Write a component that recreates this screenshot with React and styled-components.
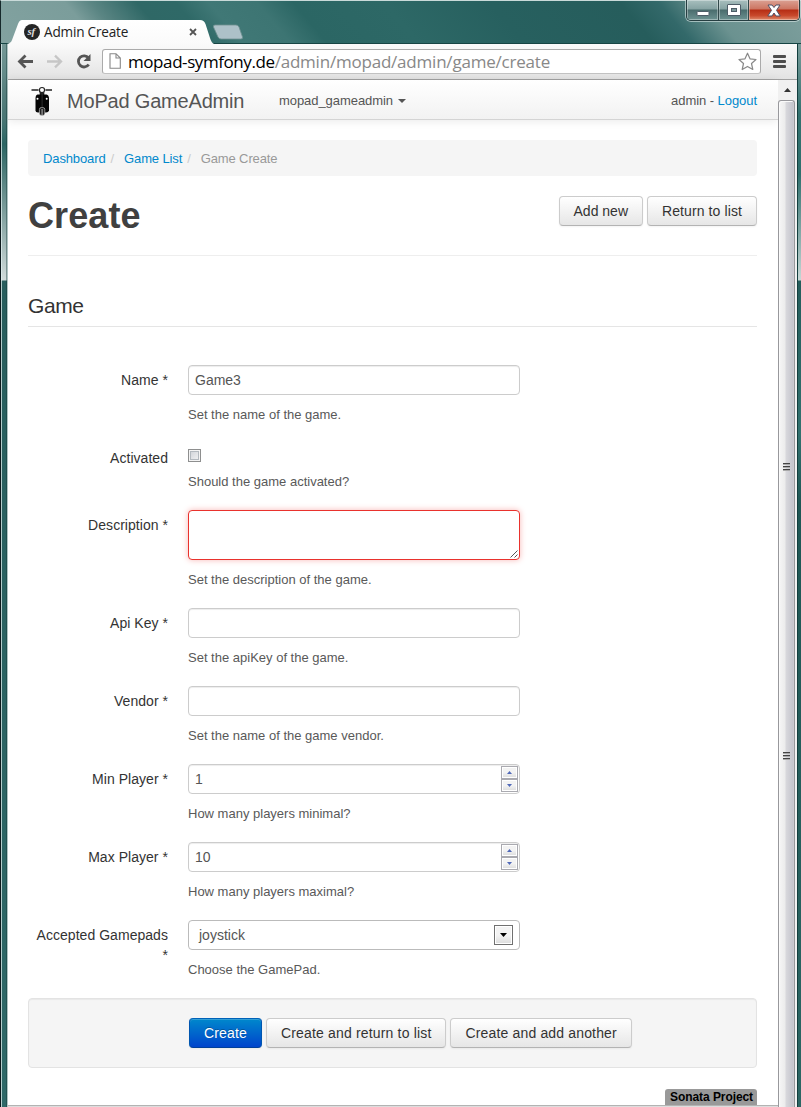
import React from 'react';
import styled, { createGlobalStyle, css } from 'styled-components';

const GlobalStyle = createGlobalStyle`
  *, *::before, *::after { box-sizing: border-box; }
  html, body { margin: 0; padding: 0; overflow: hidden; }
  body {
    font: 14px/20px "Liberation Sans", Arial, sans-serif;
    color: #333;
    background: #285e5d;
  }
`;

const BrowserWindow = styled.div`
  width: 801px;
  height: 1107px;
  display: flex;
  flex-direction: column;
  overflow: hidden;
`;

const TitleBar = styled.header`
  height: 44px;
  flex: none;
  display: flex;
  align-items: flex-end;
  position: relative;
  padding-left: 7px;
  border-top: 1px solid #c9dad9;
  border-bottom: 1px solid #174544;
  border-left: 1px solid #16292b;
  background: linear-gradient(50deg, #82a2a0 0, #7b9d9b 75px, #5a8583 95px, #2f6866 130px, #2f6967 160px, #407876 185px, #3d7573 222px, #2b6664 250px, #2d6866 320px, #27605f 400px, #265d5c 500px, #33696a 530px, #6b9290 565px, #7c9e9c 630px);
`;

const TabShape = styled.div`
  position: relative;
  width: 207px;
  height: 24px;
  display: flex;
  align-items: center;
  margin-bottom: -1px;
  margin-left: -1px;
  padding: 0 17px 0 17px;
  font: 13.6px/20px "Open Sans", "Noto Sans", sans-serif;
  letter-spacing: -0.2px;
  color: #222;

  > svg.shape { position: absolute; left: 0; top: 0; }
  > *:not(.shape) { position: relative; }
`;

const TabTitle = styled.span`
  flex: 1;
  margin-left: 4px;
  white-space: nowrap;
`;

const NewTab = styled.svg`
  margin: 0 0 3px -2px;
`;

const WindowControls = styled.div`
  position: absolute;
  right: 1px;
  top: -1px;
  height: 21px;
  display: flex;
  border: 1px solid #263e41;
  border-top: 0;
  border-radius: 0 0 5px 5px;
  box-shadow: 0 0 0 1px rgba(210, 226, 225, 0.65);
  overflow: hidden;
`;

const ControlButton = styled.div`
  width: ${(p) => p.$w}px;
  display: flex;
  align-items: center;
  justify-content: center;
  border-left: 1px solid #32494b;
  box-shadow: inset 0 0 0 1px rgba(255, 255, 255, 0.35);
  background: linear-gradient(#a8bfbe 0, #86a3a3 45%, #4a6c6d 50%, #6d9291 100%);
  &:first-child { border-left: 0; }
  ${(p) => p.$close && css`
    background: linear-gradient(#dba193 0, #cc7562 45%, #b62d14 50%, #c8492c 78%, #df8b6c 100%);
  `}
`;

const Frame = styled.div`
  flex: 1;
  min-height: 0;
  display: flex;
`;

const Edge = styled.div`
  flex: none;
  width: ${(p) => (p.$left ? 8 : 4)}px;
  ${(p) => p.$left ? css`
    border-left: 1px solid #0c191b;
    border-right: 1px solid #afc4c3;
    background:
      linear-gradient(90deg, rgba(225,240,240,.75) 0 1px, transparent 1px 5px, rgba(15,50,50,.4) 5px 6px),
      linear-gradient(#759896 0, #4a7775 75px, #2b6563 100px, #698f8d 150px, #d0dbda 236px, #285e5d 237px, #2f6968 100%);
  ` : css`
    border-left: 1px solid #123e3e;
    background: linear-gradient(#789c9a 0, #33716f 70px, #2e6f6d 130px, #c6d7d5 236px, #245d5c 237px, #32716f 390px, #1f5755 460px, #2c6664 100%);
  `}
`;

const Shell = styled.div`
  flex: 1;
  min-width: 0;
  display: flex;
  flex-direction: column;
  background: #fff;
`;

const Toolbar = styled.div`
  flex: none;
  height: 36px;
  display: flex;
  align-items: center;
  padding: 0 11px 1px 9px;
  border-bottom: 1px solid #a2a2a2;
  border-radius: 0 3px 0 0;
  background: linear-gradient(#fafafa, #e3e3e3);
`;

const NavIcons = styled.svg`
  flex: none;
`;

const AddressBar = styled.div`
  flex: 1;
  height: 25px;
  display: flex;
  align-items: center;
  margin-left: 5px;
  padding: 0 3px 0 6px;
  border: 1px solid #aaa;
  border-bottom-color: #c3c3c3;
  border-radius: 3px;
  background: #fff;
  font: 17px/23px "Open Sans", "Noto Sans", sans-serif;
`;

const Url = styled.span`
  flex: 1;
  margin-left: 7px;
  white-space: nowrap;
  letter-spacing: -0.21px;
  color: #888;
  b { font-weight: 400; color: #000; letter-spacing: -0.42px; }
`;

const MenuIcon = styled.div`
  width: 13px;
  margin-left: 12px;
  display: grid;
  gap: 2px;
  i { height: 3px; border-radius: 1px; background: #4d4d4d; }
`;

const Viewport = styled.div`
  flex: 1;
  min-height: 0;
  display: flex;
`;

const Page = styled.main`
  flex: 1;
  min-width: 0;
  display: flex;
  flex-direction: column;
  border-bottom: 1px solid #ddd;
  padding-bottom: 1px;
  box-shadow: inset 0 -1px #b3b3b3;
`;

const Navbar = styled.nav`
  flex: none;
  height: 40px;
  display: flex;
  align-items: center;
  padding: 2px 21px 0 23px;
  border-bottom: 1px solid #d4d4d4;
  box-shadow: 0 1px 9px rgba(0, 0, 0, 0.09);
  background: linear-gradient(#fff, #f2f2f2);
  font-size: 13px;
  line-height: 20px;
  letter-spacing: -0.06px;
  color: #555;
`;

const Brand = styled.span`
  width: 177px;
  margin-left: 15px;
  font-size: 20px;
  letter-spacing: -0.19px;
  white-space: nowrap;
`;

const SiteMenu = styled.span`
  flex: 1;
  margin-left: 35px;
  display: flex;
  align-items: center;
  &::after {
    content: '';
    margin-left: 5px;
    border: 4px solid transparent;
    border-top-color: #555;
    border-bottom: 0;
  }
`;

const Link = styled.a`
  color: #08c;
  text-decoration: none;
`;

const Content = styled.div`
  flex: 1;
  min-height: 0;
  display: flex;
  flex-direction: column;
  padding: 20px 21px 0 20px;
`;

const Breadcrumb = styled.ul`
  flex: none;
  height: 36px;
  display: flex;
  align-items: center;
  margin: 0;
  padding: 1px 15px 0;
  list-style: none;
  border-radius: 4px;
  background: #f5f5f5;
  font-size: 13px;
  letter-spacing: -0.12px;
  color: #999;
  li + li::before { content: '/'; padding: 0 10px 0 5px; color: #ccc; }
`;

const PageHeader = styled.div`
  flex: none;
  height: 80px;
  display: flex;
  justify-content: space-between;
  align-items: flex-start;
  padding-top: 20px;
  border-bottom: 1px solid #eee;
  h1 { margin: 0; font-size: 36px; line-height: 39px; letter-spacing: 0.1px; color: #404040; }
`;

const ButtonGroup = styled.div`
  display: flex;
  gap: 4px;
`;

const Button = styled.button`
  height: 30px;
  padding: 0 14px;
  border: 1px solid #ccc;
  border-bottom-color: #b3b3b3;
  border-radius: 4px;
  background: linear-gradient(#fff, #e6e6e6);
  box-shadow: inset 0 1px 0 rgba(255, 255, 255, 0.2), 0 1px 2px rgba(0, 0, 0, 0.05);
  font: 14px/20px "Liberation Sans", Arial, sans-serif;
  letter-spacing: ${(p) => p.$spacing || 0}px;
  color: #333;
  white-space: nowrap;
  ${(p) => p.$primary && css`
    border-color: #0062b8 #0056b0 #003f9b;
    background: linear-gradient(#08c, #04c);
    color: #fff;
    text-shadow: 0 -1px 0 rgba(0, 0, 0, 0.25);
  `}
`;

const Legend = styled.h2`
  flex: none;
  height: 41px;
  margin: 30px 0 38px;
  border-bottom: 1px solid #e5e5e5;
  font-size: 21px;
  line-height: 40px;
  letter-spacing: -0.4px;
  font-weight: 400;
`;

const FieldRow = styled.div`
  flex: none;
  display: flex;
  margin-bottom: 18px;
`;

const Label = styled.label`
  width: 140px;
  margin-right: 20px;
  padding-top: 5px;
  text-align: right;
  letter-spacing: 0.04px;
`;

const Control = styled.div`
  width: 332px;
`;

const boxStyle = css`
  display: flex;
  width: 332px;
  height: 30px;
  border: 1px solid #ccc;
  border-radius: 4px;
  background: #fff;
  color: #555;
  box-shadow: inset 0 1px 1px rgba(0, 0, 0, 0.075);
`;

const TextBox = styled.div`
  ${boxStyle}
  align-items: center;
  justify-content: space-between;
  padding-left: 6px;
`;

const SelectBox = styled.div`
  ${boxStyle}
  align-items: center;
  justify-content: space-between;
  border-color: #bbb;
  box-shadow: none;
  padding: 0 6px 0 10px;
`;

const Area = styled.div`
  ${boxStyle}
  height: 50px;
  align-items: flex-end;
  justify-content: flex-end;
  padding: 1px;
  border-color: #e9322d;
  box-shadow: 0 0 6px #f8b9b7;
`;

const CheckBox = styled.div`
  width: 13px;
  height: 13px;
  margin: 6px 0 10px;
  border: 1px solid #8e8f8f;
  box-shadow: inset 0 0 0 1px #f4f4f4, inset 0 0 0 2px #b3b9bf;
  background: linear-gradient(135deg, #cbcfd5, #f6f6f6);
`;

const Help = styled.p`
  margin: 10px 0 0;
  font-size: 13px;
  line-height: 20px;
  color: #595959;
  white-space: nowrap;
`;

const Spinner = styled.div`
  width: 18px;
  height: 26px;
  display: grid;
  grid-template-rows: 13px 13px;
`;

const ArrowButton = styled.div`
  display: flex;
  align-items: center;
  justify-content: center;
  border: 1px solid ${(p) => (p.$dark ? '#707070' : '#aaaab0')};
  box-shadow: inset 0 0 0 1px #fff;
  background: linear-gradient(#f3f3f3 50%, #dcdcdc);
  ${(p) => p.$dark && css`
    width: 19px;
    height: 20px;
  `}
  ${(p) => !p.$dark && css`
    width: 17px;
  `}
`;

const FormActions = styled.div`
  flex: none;
  height: 70px;
  display: flex;
  align-items: center;
  padding-left: 160px;
  gap: 4px;
  border: 1px solid #e3e3e3;
  border-radius: 4px;
  background: #f5f5f5;
  box-shadow: inset 0 1px 1px rgba(0, 0, 0, 0.05);
`;

const FooterLabel = styled.span`
  align-self: flex-end;
  height: 16px;
  margin-top: 21px;
  padding: 0 4px 0 5px;
  border-radius: 3px 3px 0 0;
  background: #999;
  color: #000;
  font-size: 12px;
  line-height: 17px;
  font-weight: 700;
  letter-spacing: -0.08px;
  white-space: nowrap;
`;

const Scrollbar = styled.div`
  width: 19px;
  flex: none;
  display: flex;
  flex-direction: column;
  align-items: stretch;
  background: #f0f0f0;
`;

const ScrollUp = styled.div`
  height: 20px;
  display: flex;
  align-items: center;
  justify-content: center;
  padding-right: 1px;
`;

const Thumb = styled.div`
  flex: 1;
  position: relative;
  border: 1px solid #98989c;
  border-bottom: 0;
  border-radius: 3px 3px 0 0;
  box-shadow: inset 1px 1px #fafafa;
  margin-right: 2px;
  background: linear-gradient(90deg, #f6f6f6 0, #ececec 6px, #d8d8dc 7px, #c5c5cd 14px, #ddd 16px);
`;

const Grip = styled.div`
  position: absolute;
  left: 4px;
  top: ${(p) => p.$top}px;
  width: 7px;
  display: grid;
  gap: 1px;
  i { height: 2px; border-top: 1px solid #444; background: #aaa; }
`;

const Triangle = ({ up, color, w = 5 }) => (
  <svg width={w} height={(w + 1) / 2} viewBox="0 0 10 5" preserveAspectRatio="none">
    <path d={up ? 'M5 0L10 5H0Z' : 'M0 0H10L5 5Z'} fill={color} />
  </svg>
);

const Scooter = () => (
  <svg width="21" height="30" viewBox="-0.5 -1.5 21 30" overflow="visible">
    <path d="M0 2.500H7M14 2.500H20.500" stroke="#222" strokeWidth="1.300" />
    <rect x="8.200" y="4.500" width="4.600" height="5" fill="#222" />
    <circle cx="10.500" cy="2.600" r="2.600" fill="#fff" stroke="#222" strokeWidth="1.200" />
    <path d="M6 7H15Q17.500 7.500 17.500 11V23Q17 25 14.500 25H6.500Q4 25 4 23V11Q4 7.500 6 7Z" fill="#050505" />
    <circle cx="6" cy="11.200" r="1" fill="#fff" />
    <circle cx="15.200" cy="11.200" r="1" fill="#fff" />
    <path d="M10.600 6V20" stroke="#3a3a3a" strokeWidth="0.800" />
    <rect x="7.900" y="20" width="5.400" height="8" rx="2" fill="#222" stroke="#ddd" strokeWidth="0.600" />
    <path d="M10.600 21.500V27.500" stroke="#888" strokeWidth="1.500" />
  </svg>
);

const Field = ({ label, help, children }) => (
  <FieldRow>
    <Label>{label}</Label>
    <Control>
      {children}
      <Help>{help}</Help>
    </Control>
  </FieldRow>
);

const NumberBox = ({ value }) => (
  <TextBox>
    {value}
    <Spinner>
      <ArrowButton><Triangle up color="#5068b8" /></ArrowButton>
      <ArrowButton><Triangle color="#5068b8" /></ArrowButton>
    </Spinner>
  </TextBox>
);

export default function App() {
  return (
    <>
      <GlobalStyle />
      <BrowserWindow>
        <TitleBar>
          <TabShape>
            <svg className="shape" width="207" height="24" viewBox="0 0 207 24">
              <defs>
                <linearGradient id="tab" x2="0" y2="1">
                  <stop stopColor="#fff" />
                  <stop offset="1" stopColor="#fafafa" />
                </linearGradient>
              </defs>
              <path d="M0 24Q4 23 5 20L11 4Q12.500 0 15 0H193Q197 0 198.500 4L203 18Q204.500 23 207 24Z" fill="url(#tab)" />
            </svg>
            <svg width="16" height="16" viewBox="0 0 16 16">
              <circle cx="8" cy="8" r="8" fill="#252525" />
              <text x="3.500" y="11" fill="#ddd" fontFamily="Liberation Serif, serif" fontSize="11" fontStyle="italic" fontWeight="700" letterSpacing="-0.3">sf</text>
            </svg>
            <TabTitle>Admin Create</TabTitle>
            <svg width="8" height="8" viewBox="0 0 8 8">
              <path d="M1 1L7 7M7 1L1 7" stroke="#555" strokeWidth="1.800" />
            </svg>
          </TabShape>
          <NewTab width="32" height="16" viewBox="0 0 32 16">
            <path d="M3 1H24Q26 1 27 3L30.500 13Q31 15 29 15H9Q7 15 6 13L1.500 3Q1 1 3 1Z" fill="#adc1c8" stroke="#6f9090" strokeWidth="0.800" />
          </NewTab>
          <WindowControls>
            <ControlButton $w={31}>
              <svg width="14" height="20" viewBox="0 0 14 20"><rect x="1" y="11.500" width="12" height="4" rx="0.500" fill="#fff" stroke="#4e5d68" /></svg>
            </ControlButton>
            <ControlButton $w={30}>
              <svg width="14" height="12" viewBox="0 0 14 12">
                <rect x="0.500" y="0.500" width="13" height="11" rx="0.500" fill="#fff" stroke="#4e5d68" />
                <rect x="4.500" y="4.500" width="5" height="3" fill="#7c9999" stroke="#4e5d68" />
              </svg>
            </ControlButton>
            <ControlButton $w={51} $close>
              <svg width="14" height="13" viewBox="0 0 14 13">
                <path d="M1 1H5L7 3.500L9 1H13L9.500 6.300L13.200 12H9L7 9L5 12H0.800L4.500 6.300Z" fill="#fff" stroke="#4e5066" />
              </svg>
            </ControlButton>
          </WindowControls>
        </TitleBar>
        <Frame>
          <Edge $left />
          <Shell>
            <Toolbar>
              <NavIcons width="80" height="20" viewBox="0 0 80 20">
                <g fill="none" strokeWidth="2.800">
                  <path d="M2.500 10.500H16M8.500 4.500L2.500 10.500L8.500 16.500" stroke="#555" />
                  <path d="M30 10.500H43.500M38 4.700L44 10.500L38 16.300" stroke="#c6c6c6" strokeWidth="2.300" />
                  <path d="M71.500 7A5.600 5.600 0 1 0 71.700 13.500" stroke="#555" />
                </g>
                <path d="M73.500 3V10H66.500Z" fill="#555" />
              </NavIcons>
              <AddressBar>
                <svg width="12" height="16" viewBox="0 0 12 16">
                  <path d="M1 0.700H7L11.300 5V15.300H1ZM7 0.700V5H11.300" fill="#fff" stroke="#888" strokeWidth="1.100" />
                </svg>
                <Url><b>mopad-symfony.de</b>/admin/mopad/admin/game/create</Url>
                <svg width="19" height="19" viewBox="0 0 19 19">
                  <path d="M9.500 1.200L12 6.800L18 7.500L13.500 11.500L14.800 17.500L9.500 14.400L4.200 17.500L5.500 11.500L1 7.500L7 6.800Z" fill="#fff" stroke="#888" strokeWidth="1.200" strokeLinejoin="round" />
                </svg>
              </AddressBar>
              <MenuIcon><i /><i /><i /></MenuIcon>
            </Toolbar>
            <Viewport>
              <Page>
                <Navbar>
                  <Scooter />
                  <Brand>MoPad GameAdmin</Brand>
                  <SiteMenu>mopad_gameadmin</SiteMenu>
                  <span>admin - <Link>Logout</Link></span>
                </Navbar>
                <Content>
                  <Breadcrumb>
                    <li><Link>Dashboard</Link></li>
                    <li><Link>Game List</Link></li>
                    <li>Game Create</li>
                  </Breadcrumb>
                  <PageHeader>
                    <h1>Create</h1>
                    <ButtonGroup>
                      <Button>Add new</Button>
                      <Button $spacing={0.1}>Return to list</Button>
                    </ButtonGroup>
                  </PageHeader>
                  <Legend>Game</Legend>
                  <Field label="Name *" help="Set the name of the game."><TextBox>Game3</TextBox></Field>
                  <Field label="Activated" help="Should the game activated?"><CheckBox /></Field>
                  <Field label="Description *" help="Set the description of the game.">
                    <Area>
                      <svg width="8" height="8" viewBox="0 0 8 8">
                        <path d="M0.500 7.500L7.500 0.500M4.500 7.500L7.500 4.500" stroke="#555" />
                      </svg>
                    </Area>
                  </Field>
                  <Field label="Api Key *" help="Set the apiKey of the game."><TextBox /></Field>
                  <Field label="Vendor *" help="Set the name of the game vendor."><TextBox /></Field>
                  <Field label="Min Player *" help="How many players minimal?"><NumberBox value="1" /></Field>
                  <Field label="Max Player *" help="How many players maximal?"><NumberBox value="10" /></Field>
                  <Field label="Accepted Gamepads *" help="Choose the GamePad.">
                    <SelectBox>
                      joystick
                      <ArrowButton $dark><Triangle color="#000" w={7} /></ArrowButton>
                    </SelectBox>
                  </Field>
                  <FormActions>
                    <Button $primary $spacing={0.15}>Create</Button>
                    <Button $spacing={0.17}>Create and return to list</Button>
                    <Button $spacing={0.16}>Create and add another</Button>
                  </FormActions>
                  <FooterLabel>Sonata Project</FooterLabel>
                </Content>
              </Page>
              <Scrollbar>
                <ScrollUp><Triangle up color="#333" w={7} /></ScrollUp>
                <Thumb>
                  <Grip $top={362}><i /><i /><i /></Grip>
                  <Grip $top={651}><i /><i /><i /></Grip>
                </Thumb>
              </Scrollbar>
            </Viewport>
          </Shell>
          <Edge />
        </Frame>
      </BrowserWindow>
    </>
  );
}
